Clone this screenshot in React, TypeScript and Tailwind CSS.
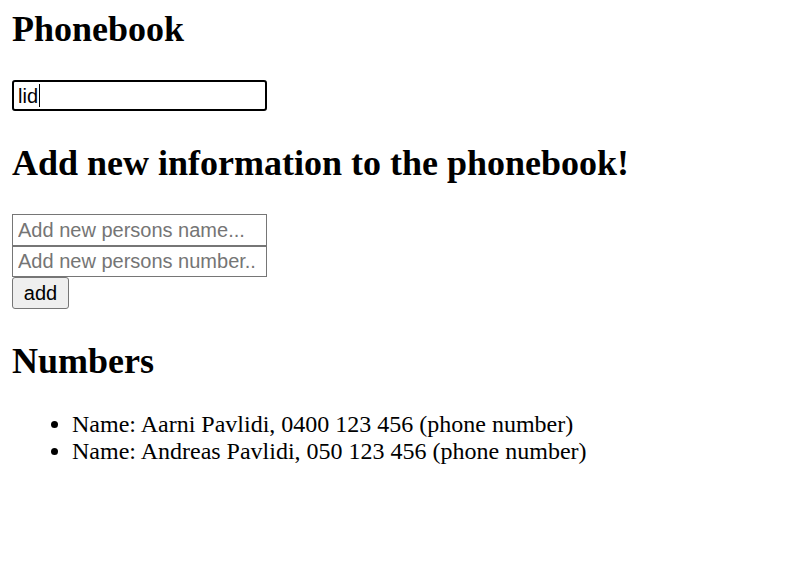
import React from "react";

export default function App() {
  return (
    <div className="min-h-[587px] bg-white px-[12px] font-['Liberation_Serif',serif] text-[24px] text-black">
      <h2 className="pt-[9px] text-[36px] font-bold leading-[41px]">Phonebook</h2>
      <div className="mt-[30px] flex h-[31px] w-[255px] items-center rounded-[3px] border-2 border-black pl-[4px] font-['Liberation_Sans',Arial,sans-serif] text-[20px]">
        <span>lid</span>
        <span className="ml-[1px] inline-block h-[23px] w-[1px] bg-black" />
      </div>
      <h2 className="mt-[32px] text-[36px] font-bold leading-[41px]">Add new information to the phonebook!</h2>
      <form className="mt-[30px] flex flex-col items-start font-['Liberation_Sans',Arial,sans-serif] text-[20px]">
        <input
          className="h-[32px] w-[255px] border border-[#767676] px-[5px] text-[20px] placeholder:text-[#757575] outline-none"
          placeholder="Add new persons name..."
        />
        <input
          className="h-[31px] w-[255px] border border-[#767676] px-[5px] text-[20px] placeholder:text-[#757575] outline-none"
          placeholder="Add new persons number.."
        />
        <button
          type="button"
          className="h-[32px] w-[57px] rounded-[3px] border border-[#767676] bg-[#efefef] text-[20px] leading-none"
        >
          add
        </button>
      </form>
      <h2 className="mt-[32px] text-[36px] font-bold leading-[41px]">Numbers</h2>
      <ul className="mt-[29px] list-disc pl-[60px] leading-normal">
        <li className="leading-[27px]">Name: Aarni Pavlidi, 0400 123 456 (phone number)</li>
        <li className="leading-[27px]">Name: Andreas Pavlidi, 050 123 456 (phone number)</li>
      </ul>
    </div>
  );
}
